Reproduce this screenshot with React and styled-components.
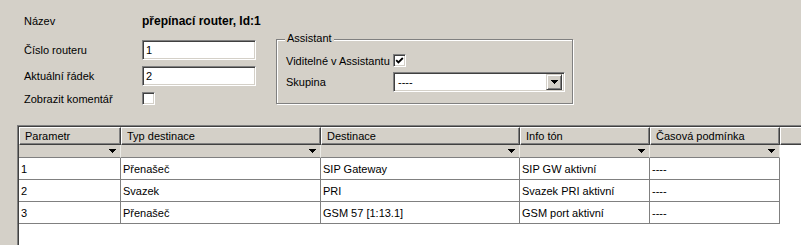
import React from 'react';
import styled, { createGlobalStyle } from 'styled-components';

const colors = {
  face: '#D4D0C8',
  shadow: '#808080',
  dark: '#404040',
  light: '#ffffff',
  text: '#000000',
};

const GlobalStyle = createGlobalStyle`
  html, body {
    margin: 0;
    padding: 0;
    background: ${colors.face};
    overflow: hidden;
  }
  body {
    font-family: "Liberation Sans", Arial, sans-serif;
    font-size: 11px;
    color: ${colors.text};
  }
`;

const Page = styled.div`
  width: 801px;
  height: 245px;
  overflow: hidden;
  background: ${colors.face};
`;

const Top = styled.div`
  display: flex;
  height: 125px;
`;

const FormColumn = styled.div`
  width: 256px;
  display: flex;
  flex-direction: column;
`;

const FieldRow = styled.div`
  display: grid;
  grid-template-columns: 118px 114px;
  align-items: center;
  padding-left: 24px;
  height: ${p => p.$h || 20}px;
  margin-top: ${p => p.$top || 6}px;
`;

const Title = styled.span`
  font-weight: bold;
  font-size: 12px;
  white-space: nowrap;
`;

const Label = styled.span`
  white-space: nowrap;
`;

const sunken = `
  box-sizing: border-box;
  border-style: solid;
  border-width: 1px;
  border-color: ${colors.shadow} ${colors.light} ${colors.light} ${colors.shadow};
  box-shadow: inset 1px 1px 0 ${colors.dark}, inset -1px -1px 0 ${colors.face};
  background: #fff;
`;

const TextBox = styled.div`
  ${sunken}
  height: 20px;
  display: flex;
  align-items: center;
  padding-left: 3px;
`;

const CheckBox = styled.div`
  ${sunken}
  width: 13px;
  height: 13px;
  display: flex;
  align-items: center;
  justify-content: center;
`;

const Group = styled.div`
  position: relative;
  box-sizing: border-box;
  margin-top: 39px;
  margin-left: 20px;
  width: 297px;
  height: 65px;
  border: 1px solid ${colors.shadow};
  box-shadow: 1px 1px 0 ${colors.light}, inset 1px 1px 0 ${colors.light};
  padding: 14px 0 0 9px;
  display: grid;
  grid-template-columns: 107px 172px;
  grid-template-rows: 13px 20px;
  row-gap: 5px;
  align-items: center;
`;

const Legend = styled.span`
  position: absolute;
  top: -8px;
  left: 8px;
  padding: 0 2px;
  background: ${colors.face};
  line-height: 13px;
`;

const Select = styled.div`
  ${sunken}
  height: 20px;
  display: flex;
  align-items: center;
  justify-content: space-between;
  padding: 0 2px 0 4px;
`;

const raised = `
  box-sizing: border-box;
  border-style: solid;
  border-width: 1px;
  border-color: ${colors.face} ${colors.dark} ${colors.dark} ${colors.face};
  box-shadow: inset 1px 1px 0 ${colors.light}, inset -1px -1px 0 ${colors.shadow};
  background: ${colors.face};
`;

const DropButton = styled.div`
  ${raised}
  width: 16px;
  height: 16px;
  display: flex;
  align-items: center;
  justify-content: center;
`;

const Grid = styled.div`
  box-sizing: border-box;
  margin-left: 17px;
  width: 800px;
  height: 130px;
  border-top: 1px solid ${colors.shadow};
  border-left: 1px solid ${colors.shadow};
  box-shadow: inset 1px 1px 0 ${colors.dark};
  padding: 1px 0 0 1px;
  background: #fff;
`;

const GridRow = styled.div`
  display: grid;
  grid-template-columns: 102px 200px 199px 130px 130px 1fr;
  height: ${p => p.$h}px;
`;

const HeaderCell = styled.div`
  box-sizing: border-box;
  border-style: solid;
  border-width: 1px;
  border-color: ${colors.light} ${colors.dark} ${colors.dark} ${colors.light};
  box-shadow: inset -1px -1px 0 ${colors.shadow};
  background: ${colors.face};
  padding-left: 5px;
  display: flex;
  align-items: center;
  white-space: nowrap;
  overflow: hidden;
`;

const FilterCell = styled.div`
  box-sizing: border-box;
  background: ${colors.face};
  border-right: 1px solid #ecebe6;
  border-bottom: 1px solid ${colors.shadow};
  display: flex;
  align-items: center;
  justify-content: flex-end;
  padding-right: 4px;
`;

const Cell = styled.div`
  box-sizing: border-box;
  border-right: 1px solid ${colors.shadow};
  border-bottom: 1px solid ${colors.shadow};
  padding-left: 2px;
  display: flex;
  align-items: center;
  white-space: nowrap;
  overflow: hidden;
`;

const Blank = styled.div`
  background: #fff;
`;

const Arrow = () => (
  <svg width="7" height="4" viewBox="0 0 7 4" shapeRendering="crispEdges">
    <polygon points="0,0 7,0 3.5,4" fill="#000" />
  </svg>
);

const Check = () => (
  <svg width="9" height="9" viewBox="0 0 9 9">
    <path d="M1.2 4.2 L3.4 6.4 L7.8 2" fill="none" stroke="#000" strokeWidth="1.8" />
  </svg>
);

const columns = ['Parametr', 'Typ destinace', 'Destinace', 'Info tón', 'Časová podmínka'];

const rows = [
  ['1', 'Přenašeč', 'SIP Gateway', 'SIP GW aktivní', '----'],
  ['2', 'Svazek', 'PRI', 'Svazek PRI aktivní', '----'],
  ['3', 'Přenašeč', 'GSM 57 [1:13.1]', 'GSM port aktivní', '----'],
];

export default function App() {
  return (
    <Page>
      <GlobalStyle />
      <Top>
        <FormColumn>
          <FieldRow $top={11}>
            <Label>Název</Label>
            <Title>přepínací router, Id:1</Title>
          </FieldRow>
          <FieldRow $top={9}>
            <Label>Číslo routeru</Label>
            <TextBox>1</TextBox>
          </FieldRow>
          <FieldRow>
            <Label>Aktuální řádek</Label>
            <TextBox>2</TextBox>
          </FieldRow>
          <FieldRow $h={13}>
            <Label>Zobrazit komentář</Label>
            <CheckBox />
          </FieldRow>
        </FormColumn>

        <Group>
          <Legend>Assistant</Legend>
          <Label>Viditelné v Assistantu</Label>
          <CheckBox><Check /></CheckBox>
          <Label>Skupina</Label>
          <Select>
            <span>----</span>
            <DropButton><Arrow /></DropButton>
          </Select>
        </Group>
      </Top>

      <Grid>
        <GridRow $h={18}>
          {columns.map(c => <HeaderCell key={c}>{c}</HeaderCell>)}
          <HeaderCell />
        </GridRow>
        <GridRow $h={13}>
          {columns.map(c => <FilterCell key={c}><Arrow /></FilterCell>)}
          <Blank />
        </GridRow>
        {rows.map(r => (
          <GridRow $h={22} key={r[0]}>
            {r.map((v, i) => <Cell key={i}>{v}</Cell>)}
            <Blank />
          </GridRow>
        ))}
      </Grid>
    </Page>
  );
}
